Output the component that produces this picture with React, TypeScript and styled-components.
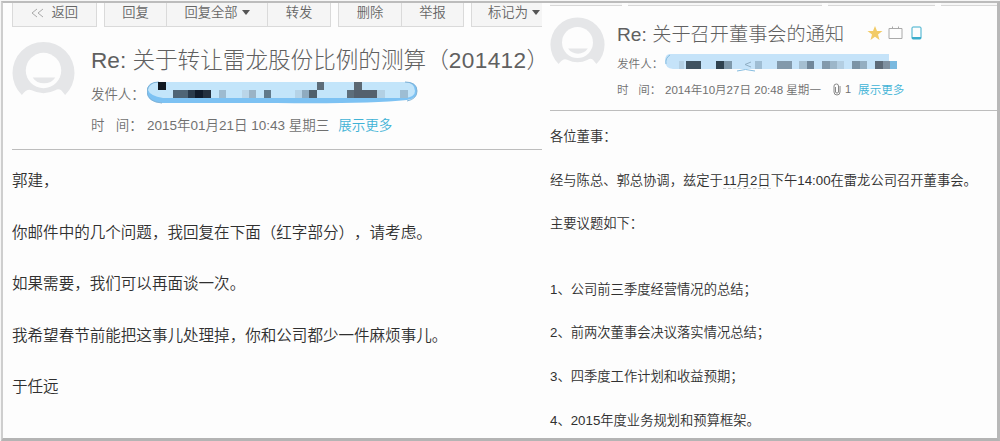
import styled, { createGlobalStyle } from 'styled-components'

const GlobalStyle = createGlobalStyle`
    * {
        box-sizing: border-box;
    }

    body {
        margin: 0;
        background: #fdfdfd;
        font-family: "Liberation Sans", "Noto Sans CJK SC", sans-serif;
        font-weight: 350;
        text-spacing-trim: space-all;
    }
`

const Page = styled.div`
    display: flex;
    width: 1000px;
    height: 441px;
    padding: 1px 0 0 1px;
    overflow: hidden;
    background: #f6f6f6;
`

const Frame = styled.main`
    display: flex;
    width: 999px;
    height: 440px;
    overflow: hidden;
    border-style: solid;
    border-width: 2px 3px 3px 2px;
    border-color: #bcbcbc #b8b8b8 #b4b4b4 #cecece;
    background: #fdfdfd;
`

const LeftMail = styled.article`
    width: 539px;
    padding-left: 9px;
`

const RightMail = styled.article`
    flex: 1;
    padding-left: 8px;
`

const Toolbar = styled.div`
    display: flex;
    gap: 7px;
    height: 24px;
    overflow: hidden;
`

const ButtonGroup = styled.div`
    display: flex;
    border: 1px solid #dadada;
    border-top: none;
    background: #f5f5f5;
`

const Button = styled.div<{ $width: number }>`
    display: flex;
    align-items: center;
    justify-content: center;
    gap: 4px;
    flex: none;
    width: ${({ $width }) => $width}px;
    height: 23px;
    padding-bottom: 4px;
    color: #666;
    font-size: 13.3px;
    line-height: 16px;
    white-space: nowrap;

    & + & {
        border-left: 1px solid #dadada;
    }
`

const Caret = styled.i`
    border: 4px solid transparent;
    border-top: 5px solid #555;
    border-bottom: none;
`

const CutToolbar = styled.div`
    display: flex;
    gap: 6px;
    height: 3px;
`

const CutButton = styled.div<{ $width: number }>`
    width: ${({ $width }) => $width}px;
    border-bottom: 1px solid #d8d8d8;
    background: #f7f7f7;
`

const Head = styled.header<{ $height: number; $gap: number; $top: number }>`
    display: flex;
    gap: ${({ $gap }) => $gap}px;
    height: ${({ $height }) => $height}px;
    padding-top: ${({ $top }) => $top}px;
    border-bottom: 1px solid #bdbdbd;
`

const Picture = styled.svg`
    flex: none;
`

const Info = styled.div`
    white-space: nowrap;
`

const Title = styled.h1<{ $size: number; $height: number }>`
    display: flex;
    align-items: center;
    margin: 0;
    height: ${({ $height }) => $height}px;
    color: #606060;
    font-size: ${({ $size }) => $size}px;
    font-weight: 300;
`

const Digits = styled.span`
    letter-spacing: 0.4px;
`

const Icons = styled.span`
    display: flex;
    align-items: center;
    gap: 5px;
    margin-left: 23px;
`

const Row = styled.div<{ $size: number; $height: number }>`
    display: flex;
    align-items: center;
    height: ${({ $height }) => $height}px;
    color: #707070;
    font-size: ${({ $size }) => $size}px;
`

const Label = styled.span<{ $width: number }>`
    flex: none;
    width: ${({ $width }) => $width}px;
    white-space: pre;
`

const Count = styled.span`
    display: flex;
    align-items: center;
    gap: 4px;
    margin-left: 12px;
    font-size: 11px;
`

const More = styled.a<{ $space: number }>`
    margin-left: ${({ $space }) => $space}px;
    color: #3fb3d6;
`

const Body = styled.div<{ $size: number; $height: number; $top: number }>`
    padding-top: ${({ $top }) => $top}px;
    color: #303030;
    font-size: ${({ $size }) => $size}px;
    line-height: ${({ $height }) => $height}px;
    white-space: nowrap;

    p {
        margin: 0;
    }
`

const Topics = styled.div`
    padding-top: 21.5px;
`

const DateMark = styled.span`
    border-bottom: 1px dashed #ccc;
`

function Avatar({ size }: { size: number }) {
    return (
        <Picture width={size} height={size} viewBox="0 0 64 64">
            <path d="M10 57A31.500 31.500 0 1 1 54 57L50 52Q47 50 44 52Q32 58 20 52Q15 50 10 57Z" fill="#e5e6e8" />
            <circle cx="32" cy="32" r="18" fill="#fdfdfd" />
            <path d="M21 39H44Q40 45 32.500 45Q25 45 21 39Z" fill="#e5e6e8" />
        </Picture>
    )
}

type Cell = [number, number, number, string]

const leftCells: Cell[] = [
    [11, 1, 8, '#111820'],
    [26, 9, 15, '#4f6576'],
    [41, 9, 7, '#2a3b4c'],
    [48, 9, 8, '#101b2b'],
    [56, 9, 8, '#24303f'],
    [72, 9, 7, '#9dbbd0'],
    [95, 9, 7, '#bad5e8'],
    [102, 9, 7, '#9ab3c6'],
    [117, 9, 7, '#617a8b'],
    [148, 9, 7, '#b5d3e7'],
    [155, 9, 7, '#8fabbf'],
    [162, 9, 8, '#4f606c'],
    [170, 1, 7, '#5c6c78'],
    [200, 9, 7, '#5d6e7b'],
    [207, 1, 8, '#5b6872'],
    [207, 9, 23, '#54606d'],
    [230, 9, 8, '#b2d0e4'],
    [253, 9, 8, '#9dbdd3'],
]

const rightCells: Cell[] = [
    [14, 7, 5, '#b4d0e4'],
    [21, 7, 15, '#3f5260'],
    [51, 7, 8, '#2f424f'],
    [59, 7, 8, '#7e98aa'],
    [90, 7, 7, '#9fbdd3'],
    [112, 7, 15, '#8299ab'],
    [134, 7, 8, '#a5bfd1'],
    [142, 7, 7, '#70879a'],
    [157, 7, 8, '#8299ab'],
    [165, 7, 7, '#9cb6c9'],
    [172, 7, 7, '#b3cee2'],
    [187, 7, 8, '#7c94a6'],
    [195, 7, 7, '#94aec1'],
    [210, 7, 8, '#5d6a78'],
    [218, 7, 7, '#7f90a0'],
    [225, 7, 7, '#7ab9df'],
]

export default function App() {
    return (
        <Page>
            <GlobalStyle />
            <Frame>
                <LeftMail>
                    <Toolbar>
                        <ButtonGroup>
                            <Button $width={83}>
                                <svg width="13" height="10" viewBox="0 0 13 10" fill="none" stroke="#aaa">
                                    <path d="M6 1L1 5L6 9M12 1L7 5L12 9" />
                                </svg>
                                &nbsp;返回
                            </Button>
                        </ButtonGroup>
                        <ButtonGroup>
                            <Button $width={61}>回复</Button>
                            <Button $width={101}>回复全部<Caret /></Button>
                            <Button $width={63}>转发</Button>
                        </ButtonGroup>
                        <ButtonGroup>
                            <Button $width={62}>删除</Button>
                            <Button $width={62}>举报</Button>
                        </ButtonGroup>
                        <ButtonGroup>
                            <Button $width={84}>标记为<Caret /></Button>
                        </ButtonGroup>
                    </Toolbar>
                    <Head $height={123} $gap={16} $top={12}>
                        <Avatar size={63} />
                        <Info>
                            <Title $size={22.6} $height={38}>
                                <span>Re: 关于转让雷龙股份比例的测算（<Digits>201412</Digits>）</span>
                            </Title>
                            <Row $size={13.4} $height={31}>
                                <Label $width={56}>发件人：</Label>
                                <svg width="272" height="24">
                                    <path d="M12 1H258Q270 1 270 10Q270 18 260 19Q220 23 130 22L15 22Q0 21 0 11Q0 1 12 1Z" fill="#7dc2f3" />
                                    <path d="M12 1H258Q268 2 268 10Q268 16 258 17H16Q3 15 1 9Q3 1 12 1Z" fill="#c3e5fa" />
                                    <path d="M12 1Q0 1 0 11Q1 21 15 22M258 1Q270 1 270 10Q270 18 260 20" fill="none" stroke="#7fb2d6" />
                                    {leftCells.map(([x, y, w, fill]) => (
                                        <rect key={`${x}-${y}`} x={x} y={y} width={w} height="8" fill={fill} />
                                    ))}
                                </svg>
                            </Row>
                            <Row $size={13.5} $height={32}>
                                <Label $width={56}>时   间：</Label>
                                2015年01月21日 10:43 星期三
                                <More $space={9}>展示更多</More>
                            </Row>
                        </Info>
                    </Head>
                    <Body $size={15.56} $height={51.5} $top={5}>
                        <p>郭建，</p>
                        <p>你邮件中的几个问题，我回复在下面（红字部分），请考虑。</p>
                        <p>如果需要，我们可以再面谈一次。</p>
                        <p>我希望春节前能把这事儿处理掉，你和公司都少一件麻烦事儿。</p>
                        <p>于任远</p>
                    </Body>
                </LeftMail>
                <RightMail>
                    <CutToolbar>
                        <CutButton $width={72} />
                        <CutButton $width={194} />
                        <CutButton $width={107} />
                        <CutButton $width={60} />
                    </CutToolbar>
                    <Head $height={105} $gap={12} $top={9}>
                        <Avatar size={55} />
                        <Info>
                            <Title $size={19.2} $height={35}>
                                Re: 关于召开董事会的通知
                                <Icons>
                                    <svg width="16" height="16" viewBox="0 0 16 16">
                                        <path d="M8 1L10 6H15.500L11 9.500L12.500 15L8 11.700L3.500 15L5 9.500L.5 6H6Z" fill="#f2cb66" />
                                    </svg>
                                    <svg width="15" height="14" viewBox="0 0 15 14" fill="none" stroke="#aaa">
                                        <path d="M1 2.500H14V12.500H1ZM4.500 .5V3M10.500 .5V3" />
                                    </svg>
                                    <svg width="14" height="16" viewBox="0 0 14 16" fill="none" stroke="#3badcc">
                                        <rect x="4" y="2" width="9" height="12" rx="1" />
                                        <path d="M4 13H13" strokeWidth="2" />
                                    </svg>
                                </Icons>
                            </Title>
                            <Row $size={11.6} $height={25}>
                                <Label $width={48}>发件人：</Label>
                                <svg width="235" height="18">
                                    <path d="M5 0H224V7H232V15H8Q0 14 0 7Q0 0 5 0Z" fill="#c5e3f9" />
                                    <path d="M5 1Q0 4 1 10M72 17Q80 14 90 17" fill="none" stroke="#84bce0" />
                                    <path d="M86 8L80 10.500L86 13" fill="none" stroke="#8faec4" />
                                    {rightCells.map(([x, y, w, fill]) => (
                                        <rect key={x} x={x} y={y} width={w} height="8" fill={fill} />
                                    ))}
                                </svg>
                            </Row>
                            <Row $size={11.55} $height={28}>
                                <Label $width={48}>时   间：</Label>
                                2014年10月27日 20:48 星期一
                                <Count>
                                    <svg width="8" height="13" viewBox="0 0 8 13" fill="none" stroke="#888">
                                        <path d="M2.500 4V9Q2.500 10 4 10Q5.500 10 5.500 9V3Q5.500 1 3.500 1Q1 1 1 3V9Q1 12 4 12Q7 12 7 9V3" />
                                    </svg>
                                    1
                                </Count>
                                <More $space={7}>展示更多</More>
                            </Row>
                        </Info>
                    </Head>
                    <Body $size={13.3} $height={43.7} $top={4}>
                        <p>各位董事：</p>
                        <p>经与陈总、郭总协调，兹定于<DateMark>11月2日</DateMark>下午14:00在雷龙公司召开董事会。</p>
                        <p>主要议题如下：</p>
                        <Topics>
                            <p>1、公司前三季度经营情况的总结；</p>
                            <p>2、前两次董事会决议落实情况总结；</p>
                            <p>3、四季度工作计划和收益预期；</p>
                            <p>4、2015年度业务规划和预算框架。</p>
                        </Topics>
                    </Body>
                </RightMail>
            </Frame>
        </Page>
    )
}
